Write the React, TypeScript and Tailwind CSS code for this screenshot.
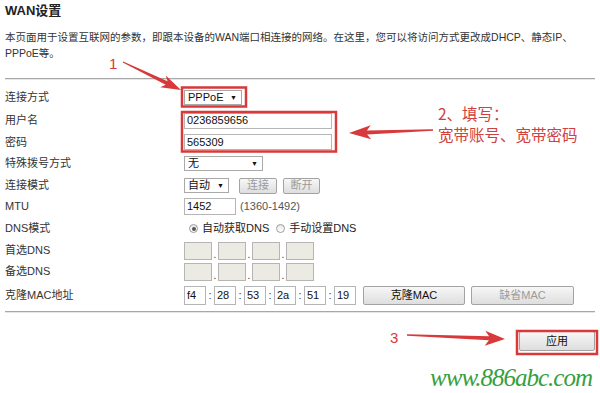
import React from "react";

function arrowPts(x1: number, y1: number, x2: number, y2: number, headLen: number, headW: number, w0: number, w1: number) {
  const dx = x2 - x1, dy = y2 - y1;
  const L = Math.sqrt(dx * dx + dy * dy);
  const ux = dx / L, uy = dy / L;
  const nx = -uy, ny = ux;
  const bx = x2 - ux * headLen, by = y2 - uy * headLen;
  const wx = bx - ux * 4, wy = by - uy * 4;
  const p = (x: number, y: number) => `${x.toFixed(1)},${y.toFixed(1)}`;
  return [
    p(x1 + nx * w0 / 2, y1 + ny * w0 / 2),
    p(bx + nx * w1 / 2, by + ny * w1 / 2),
    p(wx + nx * headW / 2, wy + ny * headW / 2),
    p(x2, y2),
    p(wx - nx * headW / 2, wy - ny * headW / 2),
    p(bx - nx * w1 / 2, by - ny * w1 / 2),
    p(x1 - nx * w0 / 2, y1 - ny * w0 / 2),
  ].join(" ");
}

function Row({ h, label, children }: { h: string; label: string; children?: React.ReactNode }) {
  return (
    <div className={`flex items-center ${h}`}>
      <div className="w-[184px] pl-[5px] text-[11px] text-[#333]">{label}</div>
      <div className="flex items-center">{children}</div>
    </div>
  );
}

function Select({ w, text }: { w: string; text: string }) {
  return (
    <div className={`flex items-center justify-between ${w} h-[15px] border border-[#a9a9a9] bg-white pl-[3px] pr-[4px] text-[11px] leading-none text-[#111]`}>
      <span>{text}</span>
      <span className="text-[7px]">▼</span>
    </div>
  );
}

function Btn({ w, h, text, disabled }: { w: string; h: string; text: string; disabled?: boolean }) {
  return (
    <div
      className={`flex items-center justify-center ${w} ${h} border border-[#a3a3a3] rounded-[2px] bg-gradient-to-b from-[#f7f7f7] to-[#dedede] text-[11px] leading-none ${disabled ? "text-[#9a9a9a]" : "text-[#111]"}`}
    >
      {text}
    </div>
  );
}

function Box({ w, h, text, gray }: { w: string; h: string; text?: string; gray?: boolean }) {
  return (
    <div className={`flex items-center ${w} ${h} border border-[#b5b5b5] pl-[2px] text-[11px] leading-none text-[#111] ${gray ? "bg-[#ebebe4]" : "bg-white"}`}>
      {text}
    </div>
  );
}

function Radio({ checked }: { checked?: boolean }) {
  return (
    <div className="flex items-center justify-center w-[9px] h-[9px] rounded-full border border-[#9c9c9c] bg-gradient-to-b from-[#e8e8e8] to-[#ffffff]">
      {checked && <div className="w-[4px] h-[4px] rounded-full bg-[#555]" />}
    </div>
  );
}

export default function App() {
  const red = "#d8393a";
  return (
    <div className="relative w-[600px] h-[393px] overflow-hidden bg-white font-[Liberation_Sans,Noto_Sans_CJK_SC,sans-serif] text-[#333]">
      <div className="pt-[3px] pl-[5px] text-[13px] leading-[16px] font-bold text-[#222]">WAN设置</div>
      <div className="mt-[10px] pl-[5px] w-[575px] text-[10.5px] leading-[16px] text-[#333]">
        本页面用于设置互联网的参数，即跟本设备的WAN端口相连接的网络。在这里，您可以将访问方式更改成DHCP、静态IP、
        <br />
        PPPoE等。
      </div>
      <div className="mt-[17px] mx-[5px] h-px bg-[#a8a8a8]" />
      <div className="mx-[5px] h-px bg-[#e6e6e6]" />

      <div className="mt-[6px]">
        <Row h="h-[23px]" label="连接方式">
          <Select w="w-[58px]" text="PPPoE" />
        </Row>
        <Row h="h-[23px]" label="用户名">
          <Box w="w-[148px]" h="h-[16px]" text="0236859656" />
        </Row>
        <Row h="h-[20px]" label="密码">
          <Box w="w-[148px]" h="h-[16px]" text="565309" />
        </Row>
        <Row h="h-[23px]" label="特殊拨号方式">
          <Select w="w-[79px]" text="无" />
        </Row>
        <Row h="h-[21px]" label="连接模式">
          <Select w="w-[45px]" text="自动" />
          <div className="ml-[10px]">
            <Btn w="w-[38px]" h="h-[16px]" text="连接" disabled />
          </div>
          <div className="ml-[6px]">
            <Btn w="w-[37px]" h="h-[16px]" text="断开" disabled />
          </div>
        </Row>
        <Row h="h-[20px]" label="MTU">
          <Box w="w-[52px]" h="h-[17px]" text="1452" />
          <span className="ml-[4px] text-[11px] text-[#555]">(1360-1492)</span>
        </Row>
        <Row h="h-[25px]" label="DNS模式">
          <div className="flex items-center text-[11px] text-[#222]">
            <div className="ml-[5px]">
              <Radio checked />
            </div>
            <span className="ml-[4px]">自动获取DNS</span>
            <div className="ml-[7px]">
              <Radio />
            </div>
            <span className="ml-[4px]">手动设置DNS</span>
          </div>
        </Row>
        <Row h="h-[19px]" label="首选DNS">
          {[0, 1, 2, 3].map((i) => (
            <div key={i} className="flex items-end">
              {i > 0 && <span className="w-[6px] text-center text-[10px] leading-[10px] text-[#333]">.</span>}
              <Box w="w-[28px]" h="h-[18px]" gray />
            </div>
          ))}
        </Row>
        <Row h="h-[23px]" label="备选DNS">
          {[0, 1, 2, 3].map((i) => (
            <div key={i} className="flex items-end">
              {i > 0 && <span className="w-[6px] text-center text-[10px] leading-[10px] text-[#333]">.</span>}
              <Box w="w-[28px]" h="h-[18px]" gray />
            </div>
          ))}
        </Row>
        <Row h="h-[24px]" label="克隆MAC地址">
          {["f4", "28", "53", "2a", "51", "19"].map((t, i) => (
            <div key={i} className="flex items-center">
              {i > 0 && <span className="w-[8px] text-center text-[11px] text-[#333]">:</span>}
              <Box w="w-[22px]" h="h-[19px]" text={t} />
            </div>
          ))}
          <div className="ml-[7px]">
            <Btn w="w-[102px]" h="h-[19px]" text="克隆MAC" />
          </div>
          <div className="ml-[6px]">
            <Btn w="w-[103px]" h="h-[19px]" text="缺省MAC" disabled />
          </div>
        </Row>
      </div>

      <div className="mt-[4px] mx-[5px] h-px bg-[#a8a8a8]" />
      <div className="mx-[5px] h-px bg-[#e6e6e6]" />

      <div className="flex justify-end pr-[5px] mt-[18px]">
        <Btn w="w-[76px]" h="h-[20px]" text="应用" />
      </div>

      <div className="absolute left-[400px] top-[364px] w-[192px] text-right text-[25px] leading-[28px] italic tracking-[-1px] text-[#35a040] font-[Liberation_Serif,serif]">
        www.886abc.com
      </div>

      {/* annotations */}
      <div className="absolute left-[109px] top-[56px] text-[15px] leading-[16px] text-[#d8393a]">1</div>
      <div className="absolute left-[390px] top-[330px] text-[15px] leading-[16px] text-[#d8393a]">3</div>
      <div className="absolute left-[438px] top-[103px] text-[15.5px] leading-[21px] text-[#d0403f] font-[Noto_Sans_CJK_SC,sans-serif]">
        <div>2、填写：</div>
        <div>宽带账号、宽带密码</div>
      </div>
      <svg className="absolute left-0 top-0 pointer-events-none" width="600" height="393" viewBox="0 0 600 393">
        <rect x="182" y="87.5" width="64" height="19" fill="none" stroke={red} strokeWidth="2.5" />
        <rect x="182" y="112" width="154" height="39.5" fill="none" stroke={red} strokeWidth="2.5" />
        <rect x="517" y="331" width="80" height="23" fill="none" stroke={red} strokeWidth="2.5" />
        <polygon points={arrowPts(123, 62, 181, 90, 16, 13, 1, 4)} fill={red} />
        <polygon points={arrowPts(433, 130, 349, 133, 18, 14, 1.5, 4)} fill={red} />
        <polygon points={arrowPts(407, 335, 505, 339, 16, 15, 1.5, 4)} fill={red} />
      </svg>
    </div>
  );
}
